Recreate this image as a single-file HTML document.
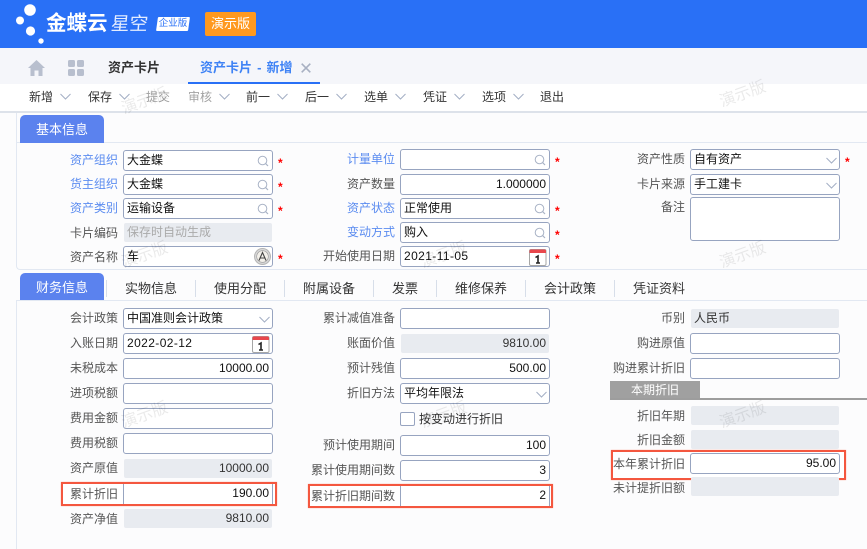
<!DOCTYPE html>
<html lang="zh"><head><meta charset="utf-8"><title>资产卡片</title>
<style>
*{box-sizing:border-box}
html,body{margin:0;padding:0}
body{width:867px;height:549px;position:relative;overflow:hidden;background:#fcfcfd;font:12px/20px "Liberation Sans","Noto Sans CJK SC",sans-serif;color:#222}
div,span,svg{position:absolute}
.lb{text-align:right;color:#555;height:20px;white-space:nowrap}
.c1{left:18px;width:100px}.c2{left:285px;width:110px}.c3{left:585px;width:100px}
.b{color:#5b8cf0}
.f{height:21px;border:1px solid #97a4c0;border-radius:3px;background:#fff;padding:0 3px;line-height:19px;white-space:nowrap;color:#111;font-size:12px}
.x1{left:123px;width:150px}.x2{left:400px;width:150px}.x3{left:690px;width:150px}
.r{text-align:right}
.d{letter-spacing:.4px}
.ro{height:19px;border-radius:2px;background:#e8ebf0;border:0;line-height:19px;padding:0 3px;color:#333;font-size:12px;white-space:nowrap}
.ro1{left:124px;width:148px}.ro2{left:401px;width:148px}.ro3{left:691px;width:148px}
.s{color:#f00;font-size:12px;line-height:12px;font-weight:bold}
.t{top:86px;height:22px;line-height:22px;color:#333;white-space:nowrap}
.g{color:#a3a3a3}
.tab{font-size:13px;color:#333;height:20px;white-space:nowrap}
.sep{width:1px;height:17px;background:#d7dee9}
.box{border:2px solid #f4573f;box-shadow:0 0 1px #f9a090}
.wm{color:#000;opacity:.08;font-size:16px;line-height:18px;transform:rotate(-20deg);white-space:nowrap;z-index:9}
.tb{left:20px;width:84px;background:#5b82ee;color:#fff;border-radius:5px 5px 0 0;font-size:13px;text-align:center}
.nb{border-top:0;border-bottom:0;border-radius:0}
</style></head><body>
<svg width="0" height="0" style="left:0;top:0"><defs>
<symbol id="q" viewBox="0 0 12 12"><circle cx="5.5" cy="5.5" r="4.3" fill="none" stroke="#a9b3c6" stroke-width="1"/><path d="M8.6 8.6L11 11" stroke="#a9b3c6" stroke-width="1.2" fill="none"/></symbol>
<symbol id="v" viewBox="0 0 11 7"><path d="M.5 1L5.5 6L10.5 1" stroke="#a3aec4" stroke-width="1" fill="none"/></symbol>
<symbol id="cal" viewBox="0 0 18 17"><rect x=".5" y=".5" width="16.5" height="16" rx="1.5" fill="#fff" stroke="#a6a6a6"/><path d="M.5 2Q.5 .5 2 .5H15.5Q17 .5 17 2V4H.5Z" fill="#e8474c"/><path d="M6.5 8.5L9 7V14M7 14H11" stroke="#222" stroke-width="1.6" fill="none"/></symbol>
</defs></svg>

<!-- header -->
<div style="left:0;top:0;width:867px;height:48px;background:#2970f6"></div>
<svg style="left:0;top:0" width="50" height="48"><g fill="#fff"><circle cx="30" cy="10" r="5.8"/><circle cx="20" cy="20.5" r="4"/><circle cx="30.5" cy="31" r="4.6"/><circle cx="41" cy="41" r="2.7"/></g></svg>
<div style="left:46px;top:12px;height:24px;line-height:24px;font-size:20.5px;font-weight:bold;color:#fff;white-space:nowrap">金蝶云</div>
<div style="left:111px;top:13px;height:22px;line-height:22px;font-size:18.5px;color:#e4edff;white-space:nowrap;transform:skewX(-6deg)">星空</div>
<div style="left:157px;top:17px;width:32px;height:14px;background:#fff;transform:skewX(-8deg);border-radius:1px"></div>
<div style="left:158px;top:17px;width:30px;height:14px;line-height:14px;font-size:9.5px;color:#2970f6;text-align:center;white-space:nowrap">企业版</div>
<div style="left:205px;top:12px;width:51px;height:24px;line-height:24px;background:#ff991f;border-radius:2px;color:#fff;text-align:center;font-size:13px">演示版</div>

<!-- nav -->
<div style="left:0;top:48px;width:867px;height:36px;background:#f5f6fa"></div>
<svg style="left:28px;top:60px" width="17" height="16" viewBox="0 0 17 16"><path d="M8.5 0L17 8H14.5V16H10.5V10.5H6.5V16H2.5V8H0Z" fill="#b8bfce"/></svg>
<svg style="left:68px;top:60px" width="16" height="16" viewBox="0 0 16 16"><g fill="#b8bfce"><rect width="7" height="7" rx="1.6"/><rect x="9" width="7" height="7" rx="1.6"/><rect y="9" width="7" height="7" rx="1.6"/><rect x="9" y="9" width="7" height="7" rx="1.6"/></g></svg>
<div style="left:108px;top:58px;height:20px;line-height:20px;font-size:13px;font-weight:bold;color:#333;white-space:nowrap">资产卡片</div>
<div style="left:200px;top:58px;height:20px;line-height:20px;font-size:13px;font-weight:bold;color:#3f83f5;white-space:nowrap;word-spacing:1.5px">资产卡片 - 新增</div>
<svg style="left:301px;top:63px" width="10" height="10" viewBox="0 0 10 10"><path d="M.7 .7L9.3 9.3M9.3 .7L.7 9.3" stroke="#a8b0c2" stroke-width="1.6"/></svg>
<div style="left:188px;top:82px;width:132px;height:2px;background:#2970f6"></div>

<!-- toolbar -->
<div style="left:0;top:84px;width:867px;height:27px;background:#fff"></div>
<div style="left:0;top:111px;width:867px;height:2px;background:#dde2ea"></div>
<div class="t" style="left:29px">新增</div><svg style="left:60px;top:93px" width="11" height="7"><use href="#v"/></svg>
<div class="t" style="left:88px">保存</div><svg style="left:119px;top:93px" width="11" height="7"><use href="#v"/></svg>
<div class="t g" style="left:146px">提交</div>
<div class="t g" style="left:188px">审核</div><svg style="left:219px;top:93px" width="11" height="7"><use href="#v"/></svg>
<div class="t" style="left:246px">前一</div><svg style="left:277px;top:93px" width="11" height="7"><use href="#v"/></svg>
<div class="t" style="left:305px">后一</div><svg style="left:336px;top:93px" width="11" height="7"><use href="#v"/></svg>
<div class="t" style="left:364px">选单</div><svg style="left:395px;top:93px" width="11" height="7"><use href="#v"/></svg>
<div class="t" style="left:423px">凭证</div><svg style="left:454px;top:93px" width="11" height="7"><use href="#v"/></svg>
<div class="t" style="left:482px">选项</div><svg style="left:513px;top:93px" width="11" height="7"><use href="#v"/></svg>
<div class="t" style="left:540px">退出</div>

<!-- panel 1 -->
<div style="left:16px;top:113px;width:851px;height:157px;border-left:1px solid #e2e8f2;border-bottom:1px solid #e2e8f2;border-radius:0 0 0 4px"></div>
<div style="left:17px;top:142px;width:850px;height:1px;background:#e2e8f2"></div>
<div class="tb" style="top:115px;height:28px;line-height:30px">基本信息</div>

<div class="lb c1 b" style="top:150px">资产组织</div><div class="f x1" style="top:150px">大金蝶</div><svg style="left:257px;top:155px" width="12" height="12"><use href="#q"/></svg><div class="s" style="left:278px;top:157px">*</div>
<div class="lb c1 b" style="top:174px">货主组织</div><div class="f x1" style="top:174px">大金蝶</div><svg style="left:257px;top:179px" width="12" height="12"><use href="#q"/></svg><div class="s" style="left:278px;top:181px">*</div>
<div class="lb c1 b" style="top:198px">资产类别</div><div class="f x1" style="top:198px">运输设备</div><svg style="left:257px;top:203px" width="12" height="12"><use href="#q"/></svg><div class="s" style="left:278px;top:205px">*</div>
<div class="lb c1" style="top:223px">卡片编码</div><div class="ro ro1" style="top:223px;color:#aaa">保存时自动生成</div>
<div class="lb c1" style="top:247px">资产名称</div><div class="f x1" style="top:246px">车</div>
<svg style="left:254px;top:248px" width="17" height="17" viewBox="0 0 17 17"><circle cx="8.5" cy="8.5" r="8" fill="#d8d8d8" stroke="#b5b5b5"/><circle cx="8.5" cy="8.5" r="5.8" fill="#f3f0ea" stroke="#999" stroke-width=".6"/><path d="M5 12.5L8.5 4.5L12 12.5M6.2 10H10.8" stroke="#444" stroke-width="1.1" fill="none"/></svg>
<div class="s" style="left:278px;top:253px">*</div>

<div class="lb c2 b" style="top:149px">计量单位</div><div class="f x2" style="top:149px"></div><svg style="left:534px;top:154px" width="12" height="12"><use href="#q"/></svg><div class="s" style="left:555px;top:156px">*</div>
<div class="lb c2" style="top:174px">资产数量</div><div class="f x2 r" style="top:174px">1.000000</div>
<div class="lb c2 b" style="top:198px">资产状态</div><div class="f x2" style="top:198px">正常使用</div><svg style="left:534px;top:203px" width="12" height="12"><use href="#q"/></svg><div class="s" style="left:555px;top:205px">*</div>
<div class="lb c2 b" style="top:222px">变动方式</div><div class="f x2" style="top:222px">购入</div><svg style="left:534px;top:227px" width="12" height="12"><use href="#q"/></svg><div class="s" style="left:555px;top:229px">*</div>
<div class="lb c2" style="top:246px">开始使用日期</div><div class="f x2 d" style="top:246px">2021-11-05</div><svg style="left:529px;top:249px" width="18" height="17"><use href="#cal"/></svg><div class="s" style="left:555px;top:253px">*</div>

<div class="lb c3" style="top:149px">资产性质</div><div class="f x3" style="top:149px">自有资产</div><svg style="left:826px;top:157px" width="11" height="7"><use href="#v"/></svg><div class="s" style="left:845px;top:156px">*</div>
<div class="lb c3" style="top:174px">卡片来源</div><div class="f x3" style="top:174px">手工建卡</div><svg style="left:826px;top:182px" width="11" height="7"><use href="#v"/></svg>
<div class="lb c3" style="top:197px">备注</div><div class="f x3" style="top:197px;height:44px"></div>

<!-- panel 2 -->
<div style="left:16px;top:300px;width:1px;height:249px;background:#e2e8f2"></div>
<div style="left:17px;top:300px;width:850px;height:1px;background:#e2e8f2"></div>
<div class="tb" style="top:273px;height:27px;line-height:30px">财务信息</div>
<div class="sep" style="left:106px;top:280px"></div>
<div class="tab" style="left:125px;top:279px">实物信息</div>
<div class="sep" style="left:195px;top:280px"></div>
<div class="tab" style="left:214px;top:279px">使用分配</div>
<div class="sep" style="left:284px;top:280px"></div>
<div class="tab" style="left:303px;top:279px">附属设备</div>
<div class="sep" style="left:373px;top:280px"></div>
<div class="tab" style="left:392px;top:279px">发票</div>
<div class="sep" style="left:436px;top:280px"></div>
<div class="tab" style="left:455px;top:279px">维修保养</div>
<div class="sep" style="left:525px;top:280px"></div>
<div class="tab" style="left:544px;top:279px">会计政策</div>
<div class="sep" style="left:614px;top:280px"></div>
<div class="tab" style="left:633px;top:279px">凭证资料</div>

<!-- col 1 -->
<div class="lb c1" style="top:308px">会计政策</div><div class="f x1" style="top:308px">中国准则会计政策</div><svg style="left:259px;top:316px" width="11" height="7"><use href="#v"/></svg>
<div class="lb c1" style="top:333px">入账日期</div><div class="f x1 d" style="top:333px">2022-02-12</div><svg style="left:252px;top:336px" width="18" height="17"><use href="#cal"/></svg>
<div class="lb c1" style="top:358px">未税成本</div><div class="f x1 r" style="top:358px">10000.00</div>
<div class="lb c1" style="top:383px">进项税额</div><div class="f x1" style="top:383px"></div>
<div class="lb c1" style="top:408px">费用金额</div><div class="f x1" style="top:408px"></div>
<div class="lb c1" style="top:433px">费用税额</div><div class="f x1" style="top:433px"></div>
<div class="lb c1" style="top:458px">资产原值</div><div class="ro ro1 r" style="top:459px">10000.00</div>
<div class="box" style="left:61px;top:482px;width:216px;height:24px;background:#fff"></div>
<div class="lb c1" style="top:484px">累计折旧</div><div class="f x1 r nb" style="top:484px;height:20px">190.00</div>
<div class="lb c1" style="top:509px">资产净值</div><div class="ro ro1 r" style="top:509px">9810.00</div>

<!-- col 2 -->
<div class="lb c2" style="top:308px">累计减值准备</div><div class="f x2" style="top:308px"></div>
<div class="lb c2" style="top:333px">账面价值</div><div class="ro ro2 r" style="top:334px">9810.00</div>
<div class="lb c2" style="top:358px">预计残值</div><div class="f x2 r" style="top:358px">500.00</div>
<div class="lb c2" style="top:383px">折旧方法</div><div class="f x2" style="top:383px">平均年限法</div><svg style="left:536px;top:391px" width="11" height="7"><use href="#v"/></svg>
<div style="left:400px;top:412px;width:15px;height:14px;border:1px solid #97a4c0;border-radius:2px;background:#fff"></div>
<div style="left:419px;top:409px;color:#333;white-space:nowrap">按变动进行折旧</div>
<div class="lb c2" style="top:435px">预计使用期间</div><div class="f x2 r" style="top:435px">100</div>
<div class="lb c2" style="top:460px">累计使用期间数</div><div class="f x2 r" style="top:460px">3</div>
<div class="box" style="left:308px;top:484px;width:245px;height:24px;background:#fff"></div>
<div class="lb c2" style="top:486px">累计折旧期间数</div><div class="f x2 r nb" style="top:486px;height:20px">2</div>

<!-- col 3 -->
<div class="lb c3" style="top:308px">币别</div><div class="ro ro3" style="top:309px">人民币</div>
<div class="lb c3" style="top:333px">购进原值</div><div class="f x3" style="top:333px"></div>
<div class="lb c3" style="top:358px">购进累计折旧</div><div class="f x3" style="top:358px"></div>
<div style="left:610px;top:381px;width:90px;height:17px;line-height:19px;background:#a0a0a0;color:#fff;text-align:center">本期折旧</div>
<div style="left:610px;top:398px;width:257px;height:2px;background:#9d9d9d"></div>
<div class="lb c3" style="top:406px">折旧年期</div><div class="ro ro3" style="top:406px"></div>
<div class="lb c3" style="top:430px">折旧金额</div><div class="ro ro3" style="top:430px"></div>
<div class="box" style="left:611px;top:450px;width:235px;height:30px;background:#fff"></div>
<div class="lb c3" style="top:454px">本年累计折旧</div><div class="f x3 r" style="top:453px">95.00</div>
<div class="lb c3" style="top:478px">未计提折旧额</div><div class="ro ro3" style="top:477px"></div>

<!-- watermarks -->
<div class="wm" style="left:121px;top:93px">演示版</div>
<div class="wm" style="left:719px;top:86px">演示版</div>
<div class="wm" style="left:121px;top:247px">演示版</div>
<div class="wm" style="left:420px;top:247px">演示版</div>
<div class="wm" style="left:719px;top:247px">演示版</div>
<div class="wm" style="left:121px;top:407px">演示版</div>
<div class="wm" style="left:420px;top:407px">演示版</div>
<div class="wm" style="left:719px;top:407px">演示版</div>
</body></html>
